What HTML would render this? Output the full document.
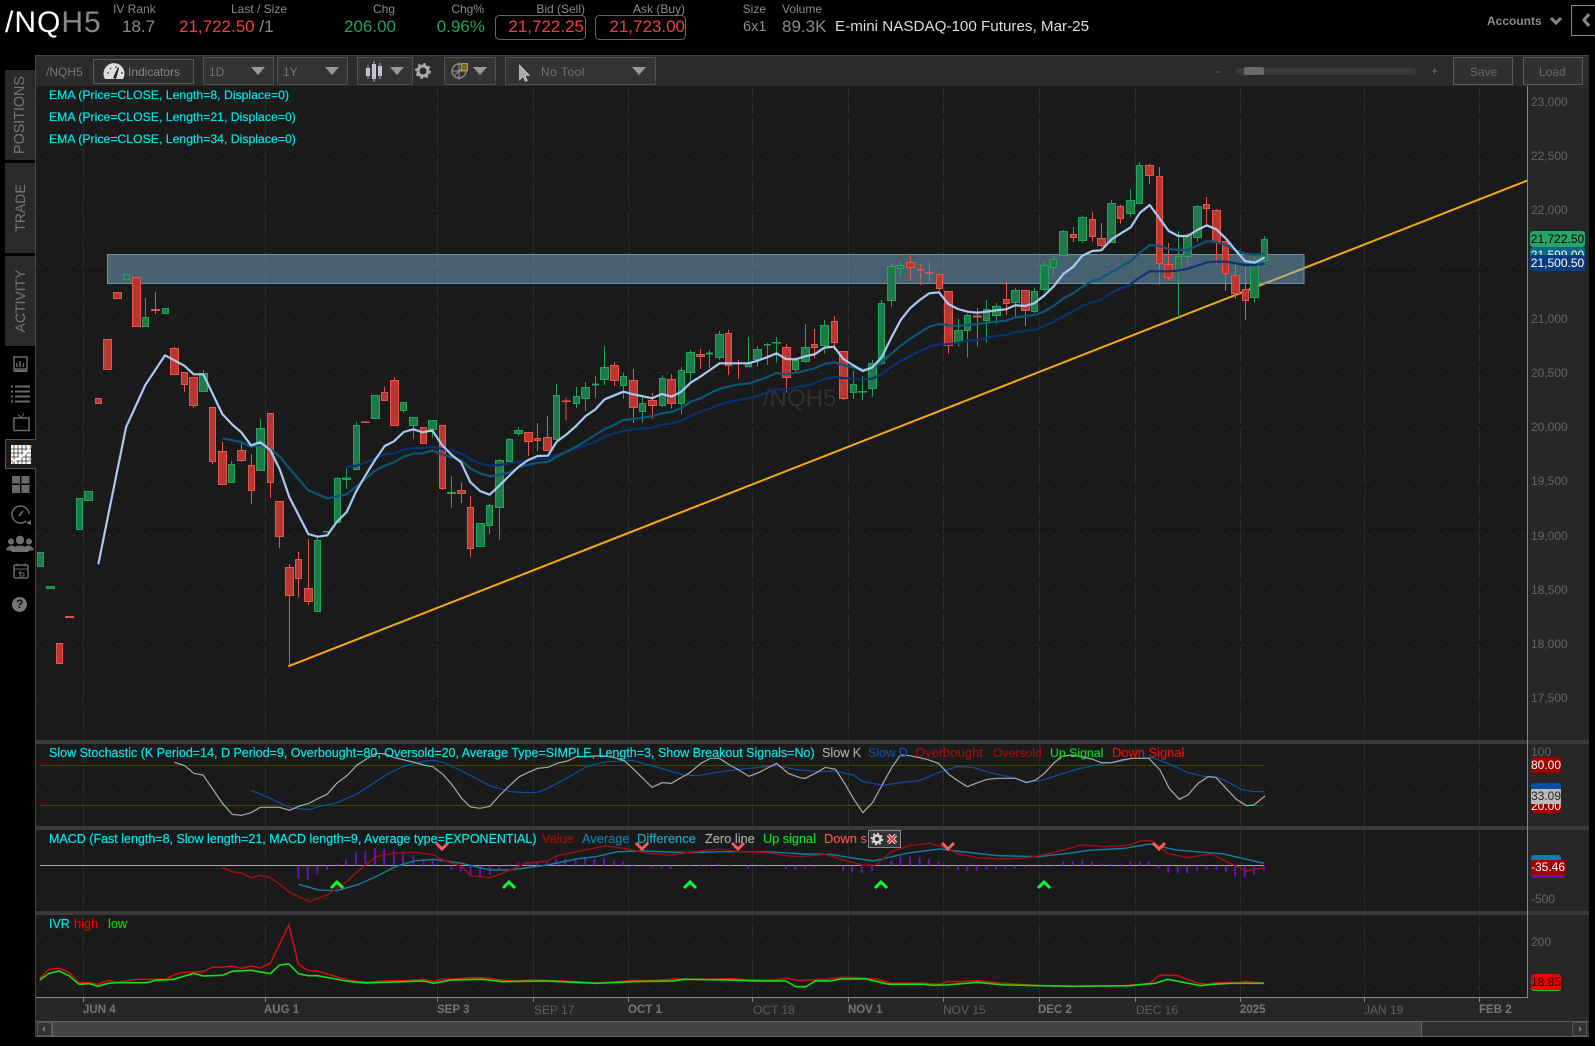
<!DOCTYPE html>
<html><head><meta charset="utf-8"><title>/NQH5</title>
<style>
html,body{margin:0;padding:0;background:#000}
#p{position:relative;width:1595px;height:1046px;overflow:hidden;background:#000;font-family:"Liberation Sans",sans-serif;font-size:12px}
.t{position:absolute;white-space:nowrap;line-height:16px;height:16px}
.h{color:#8a8a8a;font-size:12px}
.v{font-size:17px;line-height:22px;height:22px}
.c{color:#00e6e6;font-size:12.5px;-webkit-text-stroke:.2px}
.l{-webkit-text-stroke:.15px;font-size:12.8px}
.b{position:absolute;box-sizing:border-box;border:1px solid #5a5a5a;background:#333}
.a{position:absolute;white-space:nowrap;line-height:14px;height:14px;color:#666;font-size:12px}
.d{position:absolute;white-space:nowrap;line-height:14px;top:1003px;font-size:12px;color:#5f5f5f}
.d.m{color:#777;font-weight:bold;font-size:11.5px}
.tag{position:absolute;overflow:hidden;border-radius:3px;text-align:center;font-size:12.5px;line-height:15px}
svg{position:absolute;left:0;top:0}
.ns *{vector-effect:non-scaling-stroke}
</style></head><body><div id="p">
<svg width="1595" height="1046" viewBox="0 0 1595 1046" fill="none">
<!-- panel -->
<rect x="35.5" y="55" width="1553.5" height="982" fill="#1a1a1a"/>
<rect x="35.5" y="55" width="1553.5" height="31" fill="#2b2b2b"/>
<path d="M35.5 55.5H1589" stroke="#444"/>
<path d="M35.5 55V1037" stroke="#444"/>
<rect x="1528" y="86" width="61" height="935" fill="#272727"/>
<rect x="36" y="998" width="1553" height="23" fill="#272727"/>
<!-- grid -->
<g stroke="#2a2a2a" stroke-dasharray="28 3">
<path d="M83.5 86V998M265.5 86V998M437.5 86V998M533.5 86V998M628.5 86V998M752.5 86V998M848.5 86V998M943.5 86V998M1039.5 86V998M1135.5 86V998M1240.5 86V998M1364.5 86V998M1479.5 86V998"/>
</g>
<g stroke="#2a2a2a" stroke-dasharray="3 6">
<path d="M36 101.5H1528M36 155.5H1528M36 210.5H1528M36 264.5H1528M36 318.5H1528M36 372.5H1528M36 427.5H1528M36 481.5H1528M36 535.5H1528M36 590.5H1528M36 644.5H1528M36 698.5H1528M36 785.5H1528M36 898.5H1528M36 942.5H1528M36 987.5H1528"/>
</g>
<!-- trend + zone -->
<path d="M288.3 666.3L1527 180.7" stroke="#f5ab0c" stroke-width="2"/>
<rect x="107.5" y="254.5" width="1196.5" height="29" fill="#7fb8dc" fill-opacity=".45" stroke="#6f93ab"/>
<!-- dividers / axes -->
<rect x="36" y="740" width="1553" height="4" fill="#3a3a3a"/>
<rect x="36" y="826" width="1553" height="4" fill="#3a3a3a"/>
<rect x="36" y="911" width="1553" height="4" fill="#3a3a3a"/>
<path d="M1527.5 86V998" stroke="#888"/>
<path d="M36 997.5H1528" stroke="#888"/>
<path d="M83.5 998v4M265.5 998v4M437.5 998v4M533.5 998v4M628.5 998v4M752.5 998v4M848.5 998v4M943.5 998v4M1039.5 998v4M1135.5 998v4M1240.5 998v4M1364.5 998v4M1479.5 998v4" stroke="#888"/>
<!-- scrollbar -->
<rect x="36" y="1021" width="1553" height="16" fill="#2f2f2f"/>
<path d="M36 1021.5H1589M36 1036.5H1589" stroke="#5a5a5a"/>
<rect x="52.5" y="1021.5" width="1369" height="15" fill="#444" stroke="#666"/>
<rect x="37.5" y="1022.5" width="14" height="13" fill="#333" stroke="#555"/>
<rect x="1572.5" y="1022.5" width="14" height="13" fill="#333" stroke="#555"/>
<path d="M45 1026l-3 3 3 3zM1579 1026l3 3-3 3z" fill="#777"/>
<!-- toolbar shapes -->
<rect x="93.5" y="59.5" width="100" height="24" fill="#2e2e2e" stroke="#5a5a5a"/>
<rect x="203.5" y="57.5" width="70" height="27" fill="#333" stroke="#505050"/>
<rect x="277.5" y="57.5" width="70" height="27" fill="#333" stroke="#505050"/>
<rect x="357.5" y="57.5" width="55" height="27" fill="#333" stroke="#505050"/>
<rect x="444.5" y="57.5" width="51" height="27" fill="#333" stroke="#505050"/>
<rect x="505.5" y="57.5" width="150" height="27" fill="#333" stroke="#505050"/>
<path d="M251 67h14l-7 8zM325 67h14l-7 8zM390 67h14l-7 8zM473 67h14l-7 8zM632 67h14l-7 8z" fill="#999"/>
<!-- indicators icon -->
<path d="M105 79a10.500 10.500 0 1 1 18 0z" fill="#ddd"/>
<path d="M113 78l5-11 1 1-3 11z" fill="#222"/>
<path d="M107 73h2M110 68l1 1M116 66v2M121 73h2" stroke="#222"/>
<!-- candle-chart icon -->
<path d="M366 68v8h4v-8zM372 64v15h4v-15zM378 66v10h4v-10z" fill="#ccd"/>
<path d="M368 65v14M374 61v21M380 63v16" stroke="#aab"/>
<!-- gear -->
<circle cx="423" cy="71" r="5" stroke="#aaa" stroke-width="3" fill="none"/>
<circle cx="423" cy="71" r="7" stroke="#aaa" stroke-width="2" stroke-dasharray="2.500 3" fill="none"/>
<!-- drawing icon -->
<circle cx="459" cy="71" r="7" stroke="#888" stroke-width="1.500"/>
<path d="M452 71h14M459 62v18M455 75l7-7" stroke="#999"/>
<rect x="461" y="63" width="7" height="8" fill="#b8a800"/>
<path d="M462 65h5M462 67h5M462 69h5" stroke="#333"/>
<!-- cursor -->
<path d="M519.500 65v15l3.500-3.500 2.500 5 2-1-2.500-5h4.500z" fill="#aaa" stroke="#ddd" stroke-width=".6"/>
<!-- slider, save/load -->
<rect x="1236" y="68" width="180" height="7" rx="3.500" fill="#3a3a3a"/>
<rect x="1244" y="67" width="20" height="8" rx="2" fill="#6a6a6a"/>
<rect x="1453.5" y="57.5" width="59" height="27" fill="#303030" stroke="#5a5a5a"/>
<rect x="1523.5" y="57.5" width="59" height="27" fill="#303030" stroke="#5a5a5a"/>
<!-- top boxes -->
<rect x="495.500" y="15.500" width="90" height="24" rx="4" stroke="#666"/>
<rect x="595.500" y="15.500" width="90" height="24" rx="4" stroke="#666"/>
<rect x="1571.500" y="5.500" width="24" height="30" stroke="#888"/>
<path d="M1589 14l-5 6 5 6" stroke="#888" stroke-width="3"/>
<path d="M1551 18l5 5 5-5" stroke="#888" stroke-width="3"/>
<!-- left tabs -->
<rect x="5" y="70" width="30" height="90" fill="#2a2a2a"/>
<rect x="5" y="163" width="30" height="90" fill="#2a2a2a"/>
<rect x="5" y="256" width="30" height="90" fill="#2a2a2a"/>
<rect x="5.500" y="439.500" width="30" height="29" fill="#1a1a1a" stroke="#555"/>
<path d="M35.500 440v28" stroke="#1a1a1a"/>
<!-- side icons -->
<g stroke="#6a6a6a" fill="none">
<rect x="14" y="357" width="13" height="12" stroke-width="1.500"/><path d="M13.500 371h14" stroke-width="2"/><path d="M17 367v-4M20 367v-6M23.500 367v-4" stroke-width="1.500"/>
<path d="M15 386.500h15M15 391.500h15M15 396.500h15M15 401.500h15" stroke-width="2"/>
<path d="M11 386.500h2M11 391.500h2M11 396.500h2M11 401.500h2" stroke-width="2"/>
<rect x="14" y="418" width="15" height="12.500" stroke-width="1.500"/><path d="M21 418l-3-4M21 418l3-5"/>
<rect x="12" y="476" width="8" height="7.500" fill="#6a6a6a" stroke="none"/><rect x="21.500" y="476" width="8" height="7.500" fill="#6a6a6a" stroke="none"/><rect x="12" y="485" width="8" height="8" fill="#6a6a6a" stroke="none"/><rect x="21.500" y="485" width="8" height="8" fill="#6a6a6a" stroke="none"/>
<path d="M26 521a8.500 8.500 0 1 1 3-7" stroke-width="1.500"/><path d="M19 516l4-5" stroke-width="1.800"/>
<rect x="14" y="565" width="14" height="13" rx="1.500" stroke-width="1.500"/><path d="M14 569h14M17 563.500v3M25 563.500v3"/><path d="M19 573h5v3h-5M21 571l-2 2 2 2"/>
</g>
<path d="M26 523l5-3 0 5z" fill="#6a6a6a"/>
<g fill="#6f6f6f">
<circle cx="11" cy="541.500" r="3"/><circle cx="29" cy="541.500" r="3"/>
<path d="M6 550c1-3 3-4 5-4.500s3 .5 4 2l-3 3.500zM34 550c-1-3-3-4-5-4.500s-3 .5-4 2l3 3.500z"/>
<circle cx="20" cy="540" r="4.200"/>
<path d="M11.500 552c.5-4 4-6.500 8.500-6.500s8 2.500 8.500 6.500z"/>
</g>
<circle cx="19.500" cy="604.500" r="7.500" fill="#777"/>
<!-- chart watermark -->
<text x="763" y="406" font-family="Liberation Sans" font-size="24" fill="#313131">/NQH5</text>
<!-- green wicks -->
<path stroke="#22a05c" d="M145.500 298V318M203.500 370V374M231.500 461V465M260.500 419V429M317.500 537V541M337.500 477V479M346.500 468V489M356.500 422V426M403.500 410V412.700M413.500 425V438.700M432.500 429V437.700M451.500 476V507.700M489.500 504V534M499.500 459V540M509.500 438V440M518.500 427V435.700M556.500 384V396M576.500 386.700V408M585.500 382V411M595.500 376V398M604.500 346V385M623.500 373V399M642.500 397V422.700M662.500 375V407M681.500 367V414M690.500 350V380.700M709.500 350V368M719.500 331V360M748.500 337V367M757.500 346V366.700M767.500 342.700V365M776.500 337V362.700M795.500 357V374M805.500 324V363M824.500 320V353.700M853.500 371V398.700M862.500 376V400M872.500 360V396.700M881.500 300V365M891.500 263V306.700M900.500 262V278M958.500 319V346.700M967.500 314V357.700M986.500 300V342.700M996.500 303V323.700M1015.500 288V316.700M1034.500 287.700V313M1044.500 262V292M1053.500 254.700V274.700M1063.500 230V256M1082.500 215.700V242.700M1111.500 200V243M1130.500 189V216.700M1139.500 162.300V204.700M1178.500 231.300V317.700M1187.500 233.300V266.700M1197.500 205V241.700M1254.500 256.700V302.700M1264.500 236V266.700"/>
<!-- red wicks -->
<path stroke="#e8554b" d="M155.500 292V314M174.500 347V349M184.500 384V391.700M193.500 405V407.700M212.500 461V464M222.500 441.700V452M241.500 443V462M251.500 454V504M270.500 482V497.700M279.500 536V547.700M289.500 564V666M298.500 552V597.700M308.500 539V605M384.500 386.700V393M394.500 377V426M442.500 488V489.700M461.500 483V503M470.500 496V556.700M528.500 441V456M537.500 423V451M547.500 416V438M566 397.700V420M614.500 362V386M633.500 369V423M652.500 393V418.700M671.500 374V408.700M700.500 349V369M728.500 330V375M738.500 360V379M786.500 344V392.700M814.500 329V358M834.500 316V350M843.500 398V400M910.500 255V280.700M920.700 264V285M929.500 261V284M939.500 288V290.700M948.500 345V353.700M977.500 308V346.700M1006.500 282V314.700M1025.500 310V326M1073.500 227V241.700M1092.500 212.300V241.700M1101.500 223V247M1120.500 205V223.700M1149.500 164V184M1159.500 167.300V284.700M1168.500 243V280.700M1206.500 197V225.700M1216.500 209V264.700M1225.500 273V291M1235.500 265V298.700M1245.500 266.700V320"/>
<!-- green bodies -->
<path fill="#1e7a49" stroke="#23a35d" d="M37.500 552.500H43.500V566.500H37.500ZM46.500 586.500H54.500V588.500H46.500ZM76.500 498.500H82.500V529.500H76.500ZM84.500 491.500H92.500V500.500H84.500ZM123.500 274.500H129.500V279.500H123.500ZM142.500 317.500H148.500V326.500H142.500ZM162.500 308.500H168.500V313.500H162.500ZM199.500 373.500H207.500V391.500H199.500ZM228.500 464.500H234.500V482.500H228.500ZM256.500 428.500H264.500V470.500H256.500ZM314.500 540.500H320.500V611.500H314.500ZM323.500 531.500H328V532H323.500ZM334.500 478.500H340.500V522.500H334.500ZM342.500 478H350.500V479.500H342.500ZM353.500 425.500H359.500V469.500H353.500ZM371.500 395.500H379.500V418.500H371.500ZM400.500 402.500H406.500V410.500H400.500ZM409.500 417.500H417.500V425.500H409.500ZM428.500 420.500H436.500V429.500H428.500ZM447.500 492.500H455.500V493.500H447.500ZM476.500 523.500H484.500V546.500H476.500ZM486.500 505.500H492.500V525.500H486.500ZM495.500 460.500H503.500V507.500H495.500ZM506.500 439.500H512.500V461.500H506.500ZM514.500 430.500H522.500V433.500H514.500ZM553.500 395.500H559.500V439.500H553.500ZM573.500 396.500H579.500V403.500H573.500ZM581.500 387.500H589.500V398.500H581.500ZM592.500 384H598.500V385H592.500ZM600.500 367.500H608.500V379.500H600.500ZM620.500 376.500H626.500V385.500H620.500ZM639.500 403.500H645.500V411.500H639.500ZM659.500 378.500H665.500V405.500H659.500ZM678.500 370.500H684.500V403.500H678.500ZM686.500 352.500H694.500V372.500H686.500ZM706.500 353H712.500V354H706.500ZM715.500 334.500H723.500V357.500H715.500ZM745.500 362.700H751.500V366.700H745.500ZM753.500 349.500H761.500V359.500H753.500ZM764.500 344.500H770.500V345H764.500ZM772.500 342.500H780.500V343H772.500ZM792.500 360.500H798.500V369.500H792.500ZM801.500 347.500H809.500V361.500H801.500ZM820.500 325.500H828.500V345.500H820.500ZM850.500 384.500H856.500V392.500H850.500ZM858.500 391.500H866.500V392H858.500ZM868.500 363.500H876.500V388.500H868.500ZM878.500 303.500H884.500V363.500H878.500ZM887.500 266.500H895.500V300.500H887.500ZM897.500 265.500H903.500V268.500H897.500ZM954.500 330.500H962.500V342.500H954.500ZM964.500 315.500H970.500V330.500H964.500ZM983.500 309.500H989.500V320.500H983.500ZM992.500 306.500H1000.500V315.500H992.500ZM1011.500 290.500H1019.500V302.500H1011.500ZM1031.500 291.500H1037.500V311.500H1031.500ZM1040.500 265.500H1048.500V289.500H1040.500ZM1050.500 259.500H1056.500V267.500H1050.500ZM1059.500 231.500H1067.500V255.500H1059.500ZM1078.500 217.500H1086.500V240.500H1078.500ZM1107.500 203.500H1115.500V242.500H1107.500ZM1126.500 200.500H1134.500V213.500H1126.500ZM1136.500 165.500H1142.500V203.500H1136.500ZM1175.500 256.500H1181.500V271.500H1175.500ZM1183.500 235.500H1191.500V256.500H1183.500ZM1193.500 206.500H1201.500V237.500H1193.500ZM1250.500 262.500H1258.500V297.500H1250.500ZM1261.500 239.500H1267.500V260.500H1261.500Z"/>
<!-- red bodies -->
<path fill="#b93631" stroke="#e8554b" d="M65.500 616.500H73.500V617.500H65.500ZM56.500 643.500H62.500V663.500H56.500ZM95.500 398.500H101.500V403.500H95.500ZM103.500 339.500H111.500V369.500H103.500ZM113.500 292.500H121.500V298.500H113.500ZM132.500 277.500H140.500V326.500H132.500ZM151.500 309.500H159.500V310.500H151.500ZM170.500 348.500H178.500V374.500H170.500ZM181.500 372.500H187.500V384.500H181.500ZM189.500 377.500H197.500V405.500H189.500ZM209.500 407.500H215.500V461.500H209.500ZM218.500 451.500H226.500V484.500H218.500ZM237.500 450.500H245.500V460.500H237.500ZM248.500 465.500H254.500V490.500H248.500ZM267.500 413.500H273.500V482.500H267.500ZM275.500 501.500H283.500V536.500H275.500ZM285.500 567.500H293.500V595.500H285.500ZM295.500 559.500H301.500V578.500H295.500ZM304.500 588.500H312.500V601.500H304.500ZM361.500 422H369V422.500H361.500ZM381.500 392.500H387.500V400.500H381.500ZM390.500 380.500H398.500V425.500H390.500ZM420.500 427.500H426.500V443.500H420.500ZM439.500 425.500H445.500V488.500H439.500ZM457.500 490.500H465.500V493.500H457.500ZM467.500 507.500H473.500V548.500H467.500ZM524.500 432.500H532.500V441.500H524.500ZM534.500 438.500H540.500V440.500H534.500ZM543.500 437.500H551.500V450.500H543.500ZM562.500 401H570V401.500H562.500ZM610.500 365.500H618.500V380.500H610.500ZM629.500 380.500H637.500V407.500H629.500ZM648.500 400.500H656.500V405.500H648.500ZM667.500 379.500H675.500V403.500H667.500ZM696.500 354.500H704.500V356.500H696.500ZM725.500 333.500H731.500V365.500H725.500ZM734.500 363H742.500V363.500H734.500ZM782.500 347.500H790.500V377.500H782.500ZM811.500 344.500H817.500V347.500H811.500ZM831.500 321.500H837.500V342.500H831.500ZM839.500 351.500H847.500V398.500H839.500ZM906.500 262.500H914.500V267.500H906.500ZM917.500 269.500H924V270H917.500ZM925.500 272.500H933.500V273H925.500ZM936.500 274.500H942.500V288.500H936.500ZM944.500 291.500H952.500V345.500H944.500ZM973.500 316H981.500V317H973.500ZM1003.500 299.500H1009.500V303.500H1003.500ZM1021.500 290.500H1029.500V310.500H1021.500ZM1070.500 234.500H1076.500V237.500H1070.500ZM1089.500 219.500H1095.500V236.500H1089.500ZM1097.500 238.500H1105.500V245.500H1097.500ZM1117.500 206.500H1123.500V218.500H1117.500ZM1145.500 165.500H1153.500V175.500H1145.500ZM1156.500 176.500H1162.500V263.500H1156.500ZM1164.500 264.500H1172.500V277.500H1164.500ZM1203.500 204.500H1209.500V208.500H1203.500ZM1212.500 210.500H1220.500V241.500H1212.500ZM1222.500 241.500H1228.500V273.500H1222.500ZM1231.500 275.500H1239.500V293.500H1231.500ZM1242.500 289.500H1248.500V300.500H1242.500Z"/>
<!-- EMA34 -->
<polyline stroke="#0a3272" stroke-width="2.200" stroke-linejoin="round" points="346.700,466.700 356,465.700 365.700,462.700 375,458.300 384.700,454.300 394,453.300 403.700,449.700 413.300,448 422.700,448 432.300,446.700 442,449 451.700,451 461,453.300 470.300,459.300 480,463.300 489.700,465.700 499.300,465 510,463.300 518.700,461.700 528.300,460 537.700,459 548,458.700 556.700,455 566.700,451.700 576,448.300 585.700,445 595,442 604.700,436.700 623.300,430.700 633.300,429.300 652.300,427.700 661.700,424.700 671.700,423.300 681.300,420.700 690.700,416 700.300,412 710,408.700 719.700,404.700 729,401.700 748.300,398.300 757.700,396 767,392.700 776.700,389.300 786,389.300 795.700,387.300 805,385.700 814.700,383.300 824.300,379 834,377 843.300,378 862.700,379 872,378.700 881.700,374 891,367.300 900.700,361 910,356 919.700,351 929.300,346.700 939,344.300 948.300,344.300 958,342.700 967.700,340.700 977.300,340 986.700,337.700 996.300,336 1006,335 1015.300,332 1025,331 1034.300,329.700 1044,326 1053.700,321.700 1063.300,316.500 1073.300,311 1082.300,306 1092.300,302.300 1101.300,299.700 1112,292.700 1121,288.300 1130.700,284.300 1140,277.300 1149.700,271.300 1168.700,271.300 1178.300,270.700 1187.700,268.700 1197.300,265.700 1206.700,262.300 1216.300,261.700 1225.700,261.700 1235.300,263.300 1245,265 1254.700,265 1264.700,263.700"/>
<!-- EMA21 -->
<polyline stroke="#0b5876" stroke-width="2.200" stroke-linejoin="round" points="222.300,438.300 241.300,442 251,446.700 260.300,445 270.300,449 280,456.700 289.300,468.300 308.300,490.300 327.300,498.300 336.700,496.700 346.700,494.300 356,486.700 365.700,478.300 375,470.700 384.700,465.700 394,462.300 403.700,456.700 413.300,453.700 422.700,453.300 432.300,450.300 442,454.300 451.700,457.300 461,460 470.300,468.300 480,473.300 489.700,476.300 499.300,475 510,472.300 518.700,467.300 528.300,464.700 537.700,462.700 548,462 556.700,456.700 566.700,451.700 576,446.700 585.700,441 595,435 604.700,429 614,425 623.300,420 633.300,419 643.300,417.700 652.300,416 661.700,413.300 671.700,412 681.300,408 690.700,401.700 700.300,398.300 710,393.300 719.700,388.700 738.700,384.300 748.300,383.700 767,377.300 776.700,373 786,374.300 795.700,372.700 805,370.700 814.700,368.300 824.300,364 834,362.300 843.300,365 852.700,367.300 862.700,369.300 872,368.300 881.700,362.300 891,354 900.700,345.700 910,339 919.700,332.700 929.300,326.700 939,324 948.300,325.300 958,326 967.700,325 977.300,324 986.700,322.700 996.300,321.700 1006,320.700 1015.300,317.300 1025,316.300 1034.300,315 1044,311.700 1053.700,305.700 1063.300,298.500 1073.300,293.300 1082.300,286.700 1092.300,281 1101.300,278.300 1112,271.700 1121,266.700 1130.700,261 1140,252.700 1149.700,245 1159,246 1168.700,249 1178.300,250 1187.700,250 1197.300,245.700 1206.700,241.300 1216.300,242 1225.700,245 1235.300,250 1245,253.700 1254.700,254.700 1264.700,253.300"/>
<!-- EMA8 -->
<polyline stroke="#a9c8f2" stroke-width="2.200" stroke-linejoin="round" points="98.300,564.300 126,427.300 145.300,385 165,355.300 184.300,365.700 193.700,374.300 203.300,374.300 222.300,414 231.700,424 241.300,432.300 251,445.300 260.300,442.300 270.300,450 280,470 289.300,497 308.300,534 317.700,536.700 327.300,535.300 336.700,522 346.700,512 356,491.700 365.700,475 375,460 384.700,446 394,441.300 403.700,432 413.300,429.300 422.700,432.300 432.300,430.300 442,445 451.700,455 461,462.300 470.300,482 480,491 489.700,494.700 499.300,485.700 510,475 518.700,466.700 528.300,460 537.700,456 548,455.700 556.700,441.700 566.700,434.300 576,426 585.700,416 595,409.700 604.700,399.300 623.300,391.700 633.300,394.300 652.300,398.300 661.700,394 671.700,396.700 681.300,391.700 690.700,382.700 700.300,376.700 710,370 719.700,363.300 738.700,363.300 748.300,363.300 757.700,360.700 767,357.300 776.700,353.300 786,359 795.700,359.300 805,356.300 814.700,354.300 824.300,347.700 834,346.700 843.300,359 852.700,365 862.700,371 872,367.700 881.700,357.300 891,338.300 900.700,320 910,308.300 919.700,300 929.300,293.300 939,292.300 948.300,304 958,309 967.700,311.700 977.300,312.700 986.700,311.700 996.300,310.300 1006,309.300 1015.300,305.300 1025,306 1034.300,303.300 1044,295.700 1053.700,286.300 1063.300,274 1073.300,266.700 1082.300,255.700 1092.300,251 1101.300,250.300 1112,239 1121,233.300 1130.700,227.300 1140,212.700 1149.700,205 1159,217.700 1168.700,231 1178.300,236 1187.700,236 1197.300,230 1206.700,225.300 1216.300,229.300 1225.700,238.300 1235.300,250 1245,261 1254.700,262.700 1264.700,257.300"/>
<!-- Stochastic lines -->
<path d="M40 765.500H1264M40 805.500H1264" stroke="#c00000"/>
<path d="M40 865.500H1264" stroke="#aaa"/>
<g class="ns" transform="translate(0,735) scale(.5102,.3333)" fill="none" stroke-width="1.200">
<polyline stroke="#0c4fa8" points="492,166 530,190 568,218 606,224 624,215 660,203 700,177 737,140 762,115 793,93 830,78 850,76 868,82 905,108 960,152 1000,170 1030,173 1054,172 1074,160 1110,130 1150,95 1186,80 1240,76 1260,85 1300,102 1340,120 1368,122 1400,113 1450,103 1522,92 1568,106"/>
<polyline stroke="#aaa" points="342,82 362,92 380,115 398,120 416,160 436,205 455,238 473,241 492,233 510,217 530,217 548,217 568,226 587,213 606,205 624,190 641,178 660,145 680,122 700,90 720,70 737,55 755,57 773,68 793,75 812,82 830,90 848,95 868,118 885,147 905,190 922,216 941,220 960,214 980,180 1000,150 1018,125 1036,112 1054,100 1074,97 1092,85 1112,78 1130,65 1148,65 1168,63 1186,63 1205,68 1224,78 1240,100 1260,130 1278,157 1298,143 1316,145 1335,128 1350,115 1374,85 1392,70 1410,70 1430,90 1448,105 1468,124 1488,112 1522,85 1545,115 1568,128"/>
<path stroke="#7010c4" stroke-width="1.800" d="M585 392V432M603 392V435M622 392V420M641 392V405M660 392V385M678 392V373M698 392V353M716 392V348M735 392V340M753 392V340M772 392V345M790 392V350M810 392V360M830 392V372M848 392V376M866 392V390M885 392V405M903 392V412M922 392V425M941 392V428M960 392V420M978 392V407M998 392V388M1016 392V381M1034 392V380M1052 392V380M1072 392V380M1090 392V373M1108 392V370M1128 392V370M1147 392V370M1165 392V372M1184 392V370M1203 392V376M1221 392V378M1240 392V388M1260 392V395M1278 392V398M1297 392V400M1315 392V402M1334 392V395M1352 392V390M1372 392V388M1390 392V388M1408 392V385M1430 392V390M1447 392V392M1466 392V400M1485 392V395M1503 392V395M1522 392V392M1540 392V402M1559 392V405"/>
<polyline stroke="#1080a8" stroke-width="1.400" points="585,448 624,465 660,467 700,450 737,425 775,395 812,378 850,373 905,385 960,405 1000,405 1074,390 1130,372 1168,365 1210,350 1260,348 1350,353 1410,350 1500,350 1568,356"/>
<polyline stroke="#a01010" stroke-width="1.400" points="435,397 455,410 475,415 492,428 510,421 530,428 548,448 568,472 606,500 641,480 680,440 700,410 737,365 770,355 812,352 850,360 868,375 905,395 922,422 960,428 980,418 1000,405 1030,385 1074,378 1092,362 1130,350 1186,333 1224,340 1270,355 1316,360 1350,352 1410,342 1450,350 1500,352 1545,363 1568,365"/>
<polyline stroke="#d80c0c" stroke-width="1.500" points="78,730 96,703 116,700 135,712 155,743 175,743 192,748 212,736 230,742 268,733 325,733 345,717 362,712 398,710 416,697 436,697 455,693 473,700 492,693 510,699 530,685 566,570 585,688 604,707 622,708 641,717 678,733 700,740 720,742 745,738 800,737 830,733 850,740 868,732 885,733 920,728 945,728 985,735 1010,738 1040,735 1080,737 1130,740 1168,744 1205,741 1240,736 1280,737 1320,732 1400,733 1435,731 1470,735 1520,735 1540,730 1568,737"/>
<polyline stroke="#14e014" stroke-width="1.600" points="78,735 96,715 116,708 135,722 155,748 175,746 192,754 212,745 230,743 288,743 305,736 340,733 380,715 398,723 436,721 455,709 492,706 530,716 548,690 566,687 585,716 604,722 622,722 678,738 700,742 720,744 830,738 850,745 885,735 945,733 985,740 1070,738 1168,745 1240,740 1320,738 1340,733 1430,735 1480,738 1540,738 1560,755 1568,755"/>
</g>
<g class="ns" transform="translate(800,735) scale(.5071,.3333)" fill="none" stroke-width="1.200">
<polyline stroke="#0c4fa8" points="0,105 40,110 70,108 105,120 125,140 165,151 200,142 235,137 275,112 310,95 340,97 380,115 425,130 446,140 475,137 540,105 590,88 630,80 655,70 695,68 730,88 765,113 800,125 830,130 870,163 895,170 915,170"/>
<polyline stroke="#aaa" points="0,128 10,130 30,115 50,97 70,103 88,145 105,190 124,233 143,203 162,150 180,100 198,60 216,62 235,68 250,73 273,85 295,120 312,138 330,155 350,143 370,133 390,130 425,130 446,143 465,135 482,115 500,85 515,65 535,60 555,65 575,72 595,83 615,83 635,75 655,70 688,70 710,105 728,160 748,193 765,180 785,145 805,125 820,127 840,160 860,192 880,212 895,210 917,183"/>
<path stroke="#7010c4" stroke-width="1.800" d="M10 392V400M28 392V397M47 392V394M66 392V394M85 392V408M103 392V412M122 392V414M142 392V408M160 392V391M180 392V375M198 392V365M217 392V365M236 392V368M254 392V372M273 392V380M292 392V398M312 392V407M330 392V408M348 392V408M368 392V405M387 392V403M405 392V402M424 392V400M443 392V397M462 392V396M481 392V394M500 392V388M519 392V380M538 392V378M557 392V376M576 392V380M595 392V385M613 392V386M632 392V385M651 392V380M670 392V378M688 392V378M707 392V400M726 392V414M745 392V416M763 392V414M783 392V408M802 392V405M821 392V405M840 392V412M858 392V424M877 392V426M895 392V420M915 392V408"/>
<polyline stroke="#1080a8" stroke-width="1.400" points="0,357 60,358 100,368 145,378 210,355 275,342 330,352 390,362 470,365 530,355 570,346 640,340 690,327 740,345 835,357 915,385"/>
<polyline stroke="#a01010" stroke-width="1.400" points="0,365 50,358 85,375 125,391 150,390 180,350 215,332 255,325 280,335 310,355 350,368 390,372 440,370 480,360 520,345 555,330 600,335 650,330 675,316 695,318 725,355 765,368 810,357 860,393 880,408 915,398"/>
<polyline stroke="#d80c0c" stroke-width="1.500" points="0,737 50,733 85,727 110,728 150,732 180,745 240,745 275,748 290,740 320,740 350,737 400,745 470,752 540,754 640,752 690,745 710,720 745,722 785,745 805,748 825,743 860,743 880,740 915,744"/>
<polyline stroke="#14e014" stroke-width="1.600" points="0,755 12,755 30,738 60,738 80,732 130,732 175,748 245,748 260,751 290,750 350,742 400,750 540,754 650,752 700,745 725,733 790,752 815,748 850,745 915,745"/>
</g>
<!-- signal chevrons -->
<path stroke="#00ff2e" stroke-width="3" d="M331 888l6-6 6 6M503 888l6-6 6 6M684 888l6-6 6 6M875 888l6-6 6 6M1038 888l6-6 6 6"/>
<path stroke="#f75c5c" stroke-width="3" d="M436 843l6 6 6-6M636 843l6 6 6-6M732 843l6 6 6-6M942 843l6 6 6-6M1153 843l6 6 6-6"/>
<!-- gear + x box -->
<rect x="868.500" y="830.500" width="32" height="17" fill="#333" stroke="#888"/>
<circle cx="877" cy="839" r="3.500" stroke="#ddd" stroke-width="2.500"/>
<circle cx="877" cy="839" r="5.500" stroke="#ddd" stroke-width="1.500" stroke-dasharray="2 2.300"/>
<path d="M888 835l8 8M896 835l-8 8" stroke="#e8e8e8" stroke-width="3.500"/>
<path d="M888 835l8 8M896 835l-8 8" stroke="#d43030" stroke-width="1.600"/>
<!-- active chart icon -->
<rect x="11" y="445" width="20" height="19" fill="#fff"/>
<path d="M14 445v19M18 445v19M22 445v19M26 445v19M11 449h20M11 453h20M11 457h20M11 461h20" stroke="#333" stroke-width=".8"/>
<path d="M13 461l5-2 5-4 6-6" stroke="#fff" stroke-width="2.200"/>
<path d="M29 446h2v2M29 459h2v1M12 463h3" stroke="#e08020"/>
</svg>

<!-- header -->
<div class="t" style="left:5px;top:5px;height:36px;line-height:36px;font-size:30px;letter-spacing:1px;color:#fff">/NQ<span style="color:#888">H5</span></div>
<div class="t h" style="left:113px;top:1px">IV Rank</div>
<div class="t h" style="right:1308px;top:1px">Last / Size</div>
<div class="t h" style="right:1200px;top:1px">Chg</div>
<div class="t h" style="right:1111px;top:1px">Chg%</div>
<div class="t h" style="right:1010px;top:1px">Bid (Sell)</div>
<div class="t h" style="right:910px;top:1px">Ask (Buy)</div>
<div class="t h" style="right:829px;top:1px">Size</div>
<div class="t h" style="left:782px;top:1px">Volume</div>
<div class="t v" style="left:122px;top:16px;color:#8a8a8a">18.7</div>
<div class="t v" style="left:179px;top:16px;color:#ee4040">21,722.50<span style="color:#8a8a8a"> /1</span></div>
<div class="t v" style="right:1199px;top:16px;color:#27a05c">206.00</div>
<div class="t v" style="right:1110px;top:16px;color:#27a05c">0.96%</div>
<div class="t v" style="right:1011px;top:16px;color:#ee4040">21,722.25</div>
<div class="t v" style="right:910px;top:16px;color:#ee4040">21,723.00</div>
<div class="t v" style="left:743px;top:16px;color:#8a8a8a;font-size:14.5px">6x1</div>
<div class="t v" style="left:782px;top:16px;color:#8a8a8a">89.3K</div>
<div class="t v" style="left:835px;top:16px;color:#ddd;font-size:15.2px">E-mini NASDAQ-100 Futures, Mar-25</div>
<div class="t" style="left:1487px;top:13px;color:#8a8a8a;font-size:12px;font-weight:bold">Accounts</div>

<!-- tabs -->
<div class="t" style="left:-20px;top:107px;width:80px;text-align:center;transform:rotate(-90deg);color:#777;font-size:14.3px">POSITIONS</div>
<div class="t" style="left:-20px;top:200px;width:80px;text-align:center;transform:rotate(-90deg);color:#777;font-size:14px">TRADE</div>
<div class="t" style="left:-20px;top:293px;width:80px;text-align:center;transform:rotate(-90deg);color:#777;font-size:14px">ACTIVITY</div>
<div class="t" style="left:16px;top:596px;color:#111;font-size:12px;font-weight:bold">?</div>

<!-- toolbar -->
<div class="t" style="left:46px;top:64px;color:#777">/NQH5</div>
<div class="t" style="left:128px;top:64px;color:#888">Indicators</div>
<div class="t" style="left:209px;top:64px;color:#777">1D</div>
<div class="t" style="left:283px;top:64px;color:#777">1Y</div>
<div class="t" style="left:541px;top:64px;color:#777;letter-spacing:.5px">No Tool</div>
<div class="t" style="left:1216px;top:63px;color:#777">-</div>
<div class="t" style="left:1431px;top:63px;color:#777">+</div>
<div class="t" style="left:1470px;top:64px;color:#6a6a6a">Save</div>
<div class="t" style="left:1539px;top:64px;color:#6a6a6a">Load</div>

<!-- EMA legends -->
<div class="t c" style="left:49px;top:87px;font-size:12.25px">EMA (Price=CLOSE, Length=8, Displace=0)</div>
<div class="t c" style="left:49px;top:109px;font-size:12.25px">EMA (Price=CLOSE, Length=21, Displace=0)</div>
<div class="t c" style="left:49px;top:131px;font-size:12.25px">EMA (Price=CLOSE, Length=34, Displace=0)</div>

<!-- price axis -->
<div class="a" style="left:1531px;top:95px">23,000</div>
<div class="a" style="left:1531px;top:149px">22,500</div>
<div class="a" style="left:1531px;top:203px">22,000</div>
<div class="a" style="left:1531px;top:312px">21,000</div>
<div class="a" style="left:1531px;top:366px">20,500</div>
<div class="a" style="left:1531px;top:420px">20,000</div>
<div class="a" style="left:1531px;top:474px">19,500</div>
<div class="a" style="left:1531px;top:529px">19,000</div>
<div class="a" style="left:1531px;top:583px">18,500</div>
<div class="a" style="left:1531px;top:637px">18,000</div>
<div class="a" style="left:1531px;top:691px">17,500</div>
<div class="tag" style="left:1530px;top:231px;width:55px;height:16px;background:#27a566;color:#000;line-height:16px;font-size:12px">21,722.50</div>
<div class="tag" style="left:1530px;top:247px;width:55px;height:10px;background:#0a6885;color:#fff;line-height:16px;font-size:12px;border-radius:3px 3px 0 0">21,599.00</div>
<div class="tag" style="left:1530px;top:255px;width:55px;height:16px;background:#0a3a80;color:#fff;line-height:16px;font-size:12px">21,500.50</div>

<!-- lower-panel axis -->
<div class="a" style="left:1531px;top:745px">100</div>
<div class="tag" style="left:1531px;top:757px;width:30px;height:16px;background:#a00000;color:#fff;font-size:12px;line-height:16px">80.00</div>
<div class="tag" style="left:1531px;top:783px;width:30px;height:10px;background:#0a50a8"></div>
<div class="tag" style="left:1531px;top:801px;width:30px;height:12px;background:#a00000;color:#fff;font-size:12px;line-height:11px">20.00</div>
<div class="tag" style="left:1531px;top:789px;width:30px;height:15px;background:#bbb;color:#222;font-size:12px;line-height:15px;border-radius:1px">33.09</div>
<div class="tag" style="left:1531px;top:855px;width:30px;height:10px;background:#0c7fa8"></div>
<div class="tag" style="left:1531px;top:868px;width:34px;height:10px;background:#6a10b0"></div>
<div class="tag" style="left:1531px;top:860px;width:34px;height:15px;background:#a00000;color:#fff;font-size:12px;line-height:15px;border-radius:2px">-35.46</div>
<div class="a" style="left:1531px;top:892px">-500</div>
<div class="a" style="left:1531px;top:935px">200</div>
<div class="tag" style="left:1531px;top:975px;width:30px;height:16px;background:#14d014"></div>
<div class="tag" style="left:1531px;top:974px;width:30px;height:16px;background:#f00000;color:#111;font-size:12px;line-height:16px">18.85</div>

<!-- date axis -->
<div class="d m" style="left:83px">JUN 4</div>
<div class="d m" style="left:264px">AUG 1</div>
<div class="d m" style="left:437px">SEP 3</div>
<div class="d" style="left:534px">SEP 17</div>
<div class="d m" style="left:628px">OCT 1</div>
<div class="d" style="left:753px">OCT 18</div>
<div class="d m" style="left:848px">NOV 1</div>
<div class="d" style="left:943px">NOV 15</div>
<div class="d m" style="left:1038px">DEC 2</div>
<div class="d" style="left:1136px">DEC 16</div>
<div class="d m" style="left:1240px">2025</div>
<div class="d" style="left:1364px">JAN 19</div>
<div class="d m" style="left:1479px">FEB 2</div>

<!-- stochastic legend -->
<div class="t c" style="left:49px;top:745px">Slow Stochastic (K Period=14, D Period=9, Overbought=80, Oversold=20, Average Type=SIMPLE, Length=3, Show Breakout Signals=No)</div>
<div class="t l" style="left:822px;top:745px;color:#aaa;font-size:12.6px">Slow K</div>
<div class="t l" style="left:868px;top:745px;color:#0c4fa8;font-size:12.6px">Slow D</div>
<div class="t l" style="left:915px;top:745px;color:#a01010;font-size:13px">Overbought</div>
<div class="t l" style="left:993px;top:745px;color:#a01010;font-size:12.2px">Oversold</div>
<div class="t l" style="left:1050px;top:745px;color:#00e020;font-size:12.3px">Up Signal</div>
<div class="t l" style="left:1112px;top:745px;color:#e81010;font-size:12.9px">Down Signal</div>

<!-- MACD legend -->
<div class="t c" style="left:49px;top:831px">MACD (Fast length=8, Slow length=21, MACD length=9, Average type=EXPONENTIAL)</div>
<div class="t l" style="left:542px;top:831px;color:#a01010">Value</div>
<div class="t l" style="left:582px;top:831px;color:#1080a8">Average</div>
<div class="t l" style="left:637px;top:831px;color:#20a8c0;font-size:13px">Difference</div>
<div class="t l" style="left:705px;top:831px;color:#aaa">Zero line</div>
<div class="t l" style="left:763px;top:831px;color:#00e020;font-size:12.7px">Up signal</div>
<div class="t l" style="left:824px;top:831px;color:#f05050;font-size:12.9px">Down s</div>

<!-- IVR legend -->
<div class="t c" style="left:49px;top:916px">IVR</div>
<div class="t l" style="left:74px;top:916px;color:#f00000">high</div>
<div class="t l" style="left:108px;top:916px;color:#00d800">low</div>
</div></body></html>
